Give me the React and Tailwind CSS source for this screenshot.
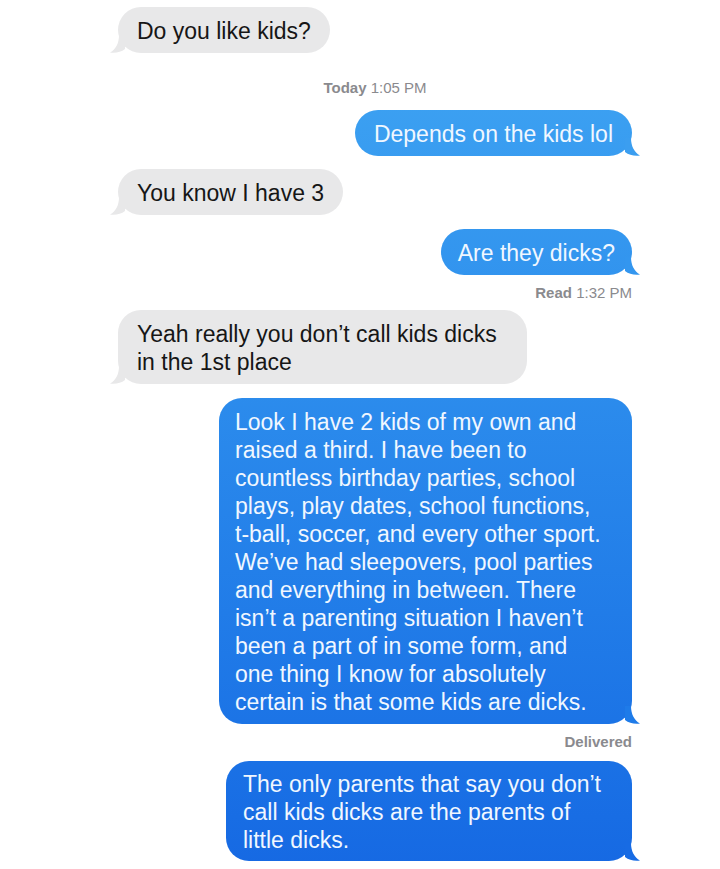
import React from 'react';

const TailRight = ({ color }) => (
    <svg
        className="absolute -right-[9px] bottom-0"
        width="16"
        height="18"
        viewBox="0 0 16 18"
    >
        <path d="M0 0 H6 C6 8 9 14 15 17.6 C9 18.4 4 17 0 14 Z" fill={color} />
    </svg>
);

const TailLeft = ({ color }) => (
    <svg
        className="absolute -left-[9px] bottom-0"
        width="16"
        height="18"
        viewBox="0 0 16 18"
    >
        <path d="M16 0 H10 C10 8 7 14 1 17.6 C7 18.4 12 17 16 14 Z" fill={color} />
    </svg>
);

const Incoming = ({ lines, className = '' }) => (
    <div className={`relative self-start rounded-[23px] bg-[#e8e8e9] px-[19px] pt-[10px] pb-[8px] text-[23px] leading-[28px] text-[#161616] ${className}`}>
        {lines.map((l, i) => (
            <div key={i} className="whitespace-nowrap">{l}</div>
        ))}
        <TailLeft color="#e8e8e9" />
    </div>
);

const Outgoing = ({ lines, tail, className = '' }) => (
    <div className={`relative self-end rounded-[23px] bg-fixed bg-linear-to-b from-[#41a7f3] to-[#1669e3] text-[23px] leading-[28px] text-[#f0f7ff] ${className}`}>
        {lines.map((l, i) => (
            <div key={i} className="whitespace-nowrap">{l}</div>
        ))}
        <TailRight color={tail} />
    </div>
);

const Stamp = ({ bold, rest, className = '' }) => (
    <div className={`text-[15px] leading-[16px] text-[#8a8a8e] ${className}`}>
        <span className="font-bold">{bold}</span>
        {rest && <span> {rest}</span>}
    </div>
);

export default function App() {
    return (
        <div className="h-[869px] w-[720px] overflow-hidden bg-white font-['Liberation_Sans',Arial,sans-serif]">
            <div className="flex flex-col pl-[118px] pr-[88px] pt-[7px]">
                <Incoming lines={['Do you like kids?']} />

                <Stamp bold="Today" rest="1:05 PM" className="mt-[27px] self-center" />

                <Outgoing
                    lines={['Depends on the kids lol']}
                    tail="#3b9ef0"
                    className="mt-[14px] px-[19px] pt-[10px] pb-[8px]"
                />

                <Incoming lines={['You know I have 3']} className="mt-[13px]" />

                <Outgoing
                    lines={['Are they dicks?']}
                    tail="#3396ef"
                    className="mt-[14px] px-[17px] pt-[10px] pb-[8px]"
                />

                <Stamp bold="Read" rest="1:32 PM" className="mt-[10px] self-end" />

                <Incoming
                    lines={['Yeah really you don’t call kids dicks', 'in the 1st place']}
                    className="mt-[9px] w-[409px]"
                />

                <Outgoing
                    lines={[
                        'Look I have 2 kids of my own and',
                        'raised a third. I have been to',
                        'countless birthday parties, school',
                        'plays, play dates, school functions,',
                        't-ball, soccer, and every other sport.',
                        'We’ve had sleepovers, pool parties',
                        'and everything in between. There',
                        'isn’t a parenting situation I haven’t',
                        'been a part of in some form, and',
                        'one thing I know for absolutely',
                        'certain is that some kids are dicks.',
                    ]}
                    tail="#1e7be9"
                    className="mt-[14px] w-[413px] px-[16px] pt-[10px] pb-[8px]"
                />

                <Stamp bold="Delivered" className="mt-[10px] self-end" />

                <Outgoing
                    lines={[
                        'The only parents that say you don’t',
                        'call kids dicks are the parents of',
                        'little dicks.',
                    ]}
                    tail="#176be4"
                    className="mt-[11px] w-[406px] px-[17px] pt-[9px] pb-[7px]"
                />
            </div>
        </div>
    );
}
